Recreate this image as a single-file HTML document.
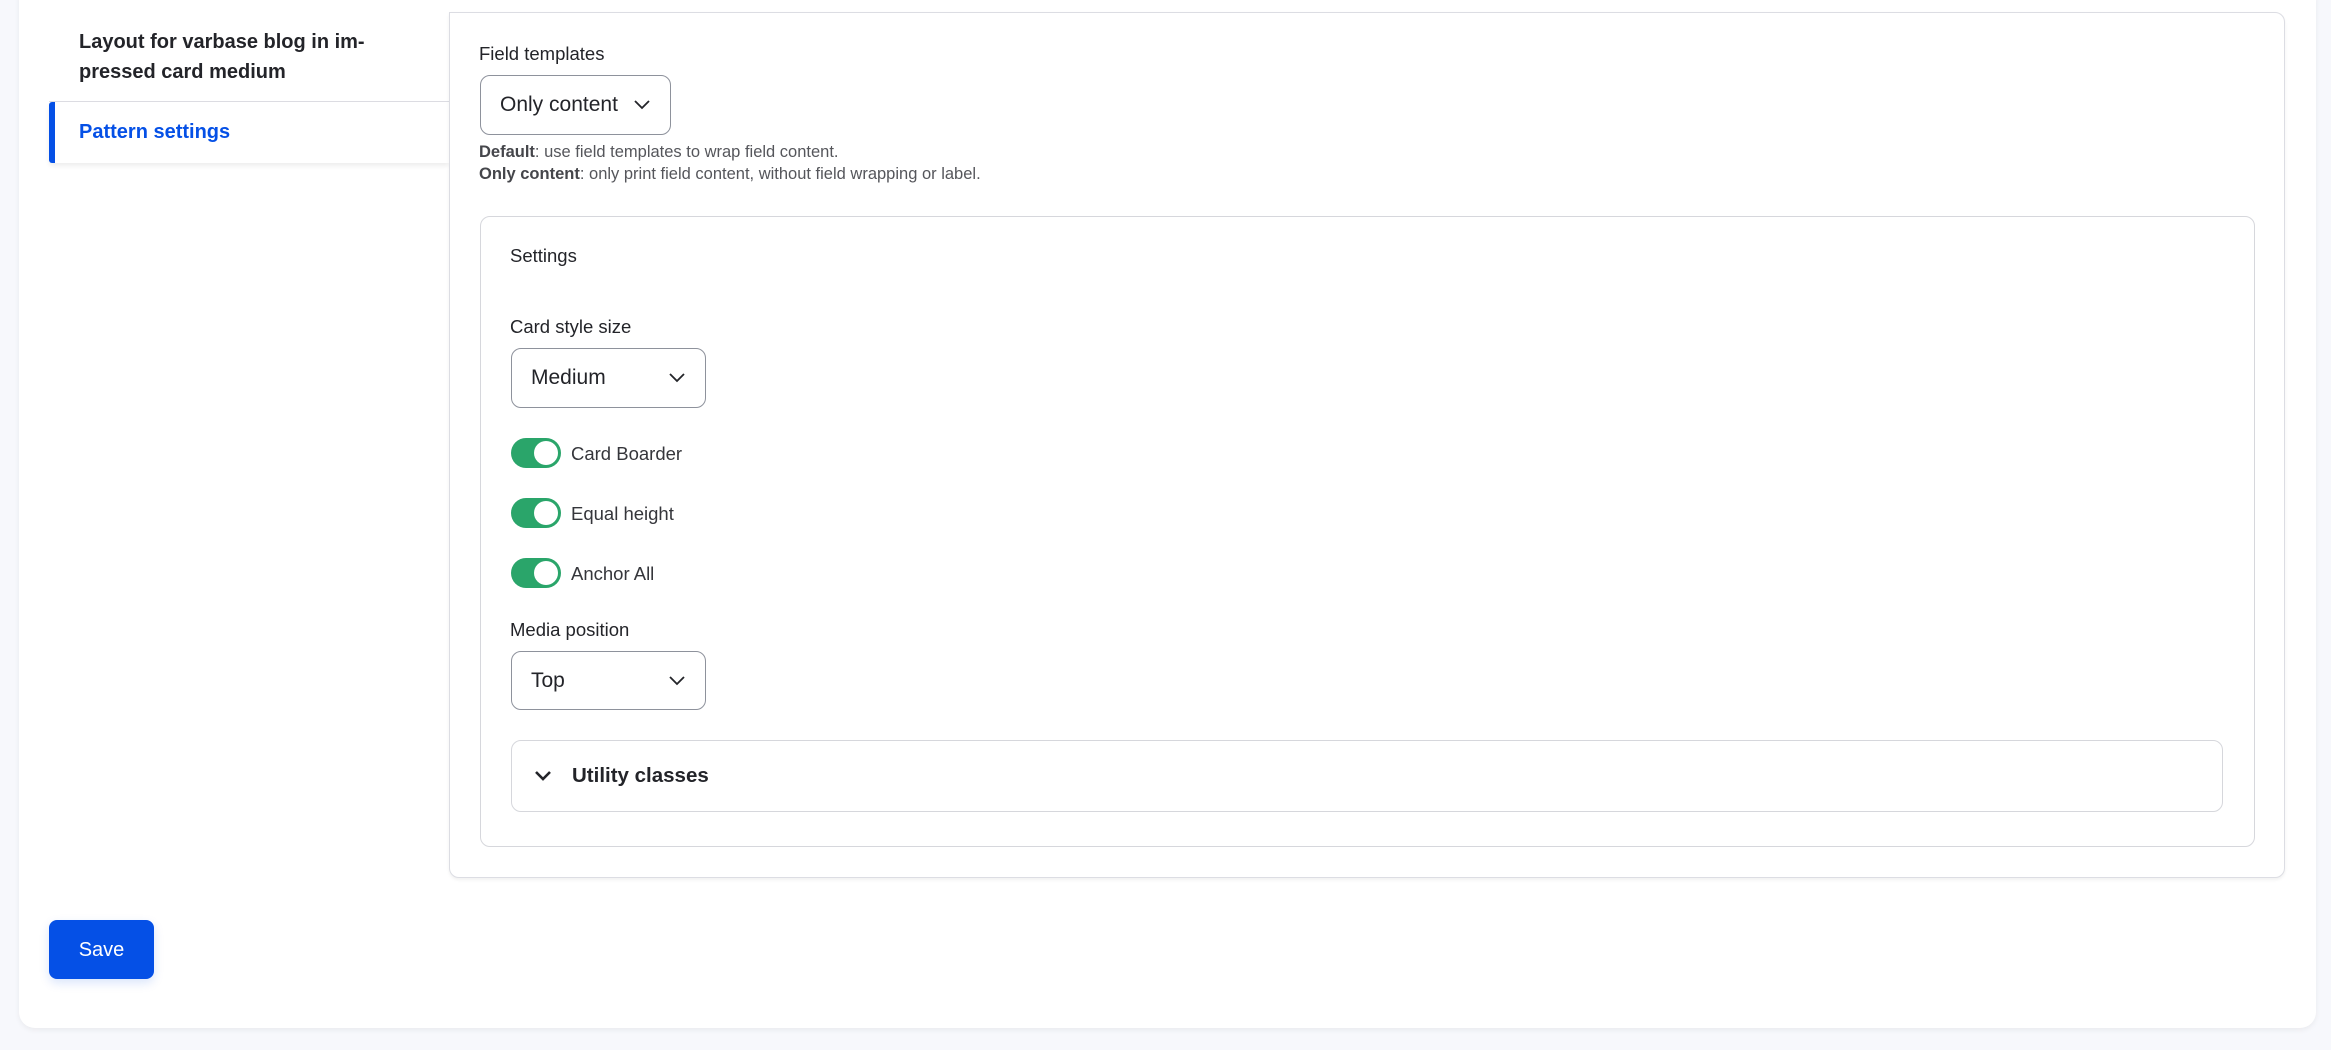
<!DOCTYPE html>
<html><head><meta charset="utf-8"><style>
*{box-sizing:border-box;margin:0;padding:0}
body{width:2331px;height:1050px;background:#f7f8fc;font-family:"Liberation Sans",sans-serif;color:#232429;position:relative;overflow:hidden}
.outer{position:absolute;left:19px;top:-20px;width:2297px;height:1048px;background:#fff;border-radius:16px;box-shadow:0 2px 6px rgba(0,0,0,.06)}
.abs{position:absolute}
.tab1{left:79px;top:27px;font-size:20px;font-weight:bold;line-height:30px;color:#232429}
.sep{left:49px;top:101px;width:400px;height:1px;background:#dcdde3}
.tab2{left:49px;top:102px;width:400px;height:61px;border-left:6px solid #0550e6;border-radius:3px 0 0 3px;box-shadow:0 3px 5px rgba(0,0,0,.07);background:#fff}
.tab2 span{position:absolute;left:24px;top:19px;font-size:20px;font-weight:bold;color:#0550e6}
.panel{left:449px;top:12px;width:1836px;height:866px;border:1px solid #dcdde3;border-radius:0 10px 10px 10px;box-shadow:0 2px 3px rgba(0,0,0,.06);background:#fff}
.lbl{font-size:18.5px;color:#232429}
.sel{border:1.5px solid #8e929c;border-radius:10px;background:#fff;font-size:21px;color:#232429}
.sel span{position:absolute;left:19px;top:17px}
.sel svg{position:absolute;right:20px;top:24px}
.desc{font-size:16.5px;color:#55565b;line-height:22px}
.desc b{color:#45464b}
.fs{left:480px;top:216px;width:1775px;height:631px;border:1.5px solid #d6d7dc;border-radius:10px}
.tg{width:50px;height:30px;border-radius:15px;background:#2aa56a}
.tg i{position:absolute;right:3px;top:3px;width:24px;height:24px;border-radius:50%;background:#fff}
.tl{font-size:18.5px;color:#35363b}
.util{left:511px;top:740px;width:1712px;height:72px;border:1.5px solid #d6d7dc;border-radius:10px}
.util span{position:absolute;left:60px;top:23px;font-size:20.5px;font-weight:bold;color:#232429}
.util svg{position:absolute;left:22px;top:29px}
.save{left:49px;top:920px;width:105px;height:59px;background:#0550e6;border-radius:8px;box-shadow:0 4px 10px rgba(5,80,230,.15);color:#fff;font-size:20px;text-align:center;line-height:61px}
</style></head><body>
<div class="outer"></div>
<div class="abs tab1">Layout for varbase blog in im-<br>pressed card medium</div>
<div class="abs sep"></div>
<div class="abs tab2"><span>Pattern settings</span></div>
<div class="abs panel"></div>
<div class="abs lbl" style="left:479px;top:43px">Field templates</div>
<div class="abs sel" style="left:480px;top:75px;width:191px;height:60px"><span>Only content</span><svg width="16" height="10" viewBox="0 0 16 10"><path d="M1 1l7 7 7-7" fill="none" stroke="#232429" stroke-width="1.8"/></svg></div>
<div class="abs desc" style="left:479px;top:141px"><b>Default</b>: use field templates to wrap field content.<br><b>Only content</b>: only print field content, without field wrapping or label.</div>
<div class="abs fs"></div>
<div class="abs lbl" style="left:510px;top:245px">Settings</div>
<div class="abs lbl" style="left:510px;top:316px">Card style size</div>
<div class="abs sel" style="left:511px;top:348px;width:195px;height:60px"><span>Medium</span><svg width="16" height="10" viewBox="0 0 16 10"><path d="M1 1l7 7 7-7" fill="none" stroke="#232429" stroke-width="1.8"/></svg></div>
<div class="abs tg" style="left:511px;top:438px"><i></i></div><div class="abs tl" style="left:571px;top:443px">Card Boarder</div>
<div class="abs tg" style="left:511px;top:498px"><i></i></div><div class="abs tl" style="left:571px;top:503px">Equal height</div>
<div class="abs tg" style="left:511px;top:558px"><i></i></div><div class="abs tl" style="left:571px;top:563px">Anchor All</div>
<div class="abs lbl" style="left:510px;top:619px">Media position</div>
<div class="abs sel" style="left:511px;top:651px;width:195px;height:59px"><span>Top</span><svg width="16" height="10" viewBox="0 0 16 10"><path d="M1 1l7 7 7-7" fill="none" stroke="#232429" stroke-width="1.8"/></svg></div>
<div class="abs util"><svg width="18" height="12" viewBox="0 0 18 12"><path d="M2 2l7 7 7-7" fill="none" stroke="#232429" stroke-width="2.6"/></svg><span>Utility classes</span></div>
<div class="abs save">Save</div>
</body></html>
